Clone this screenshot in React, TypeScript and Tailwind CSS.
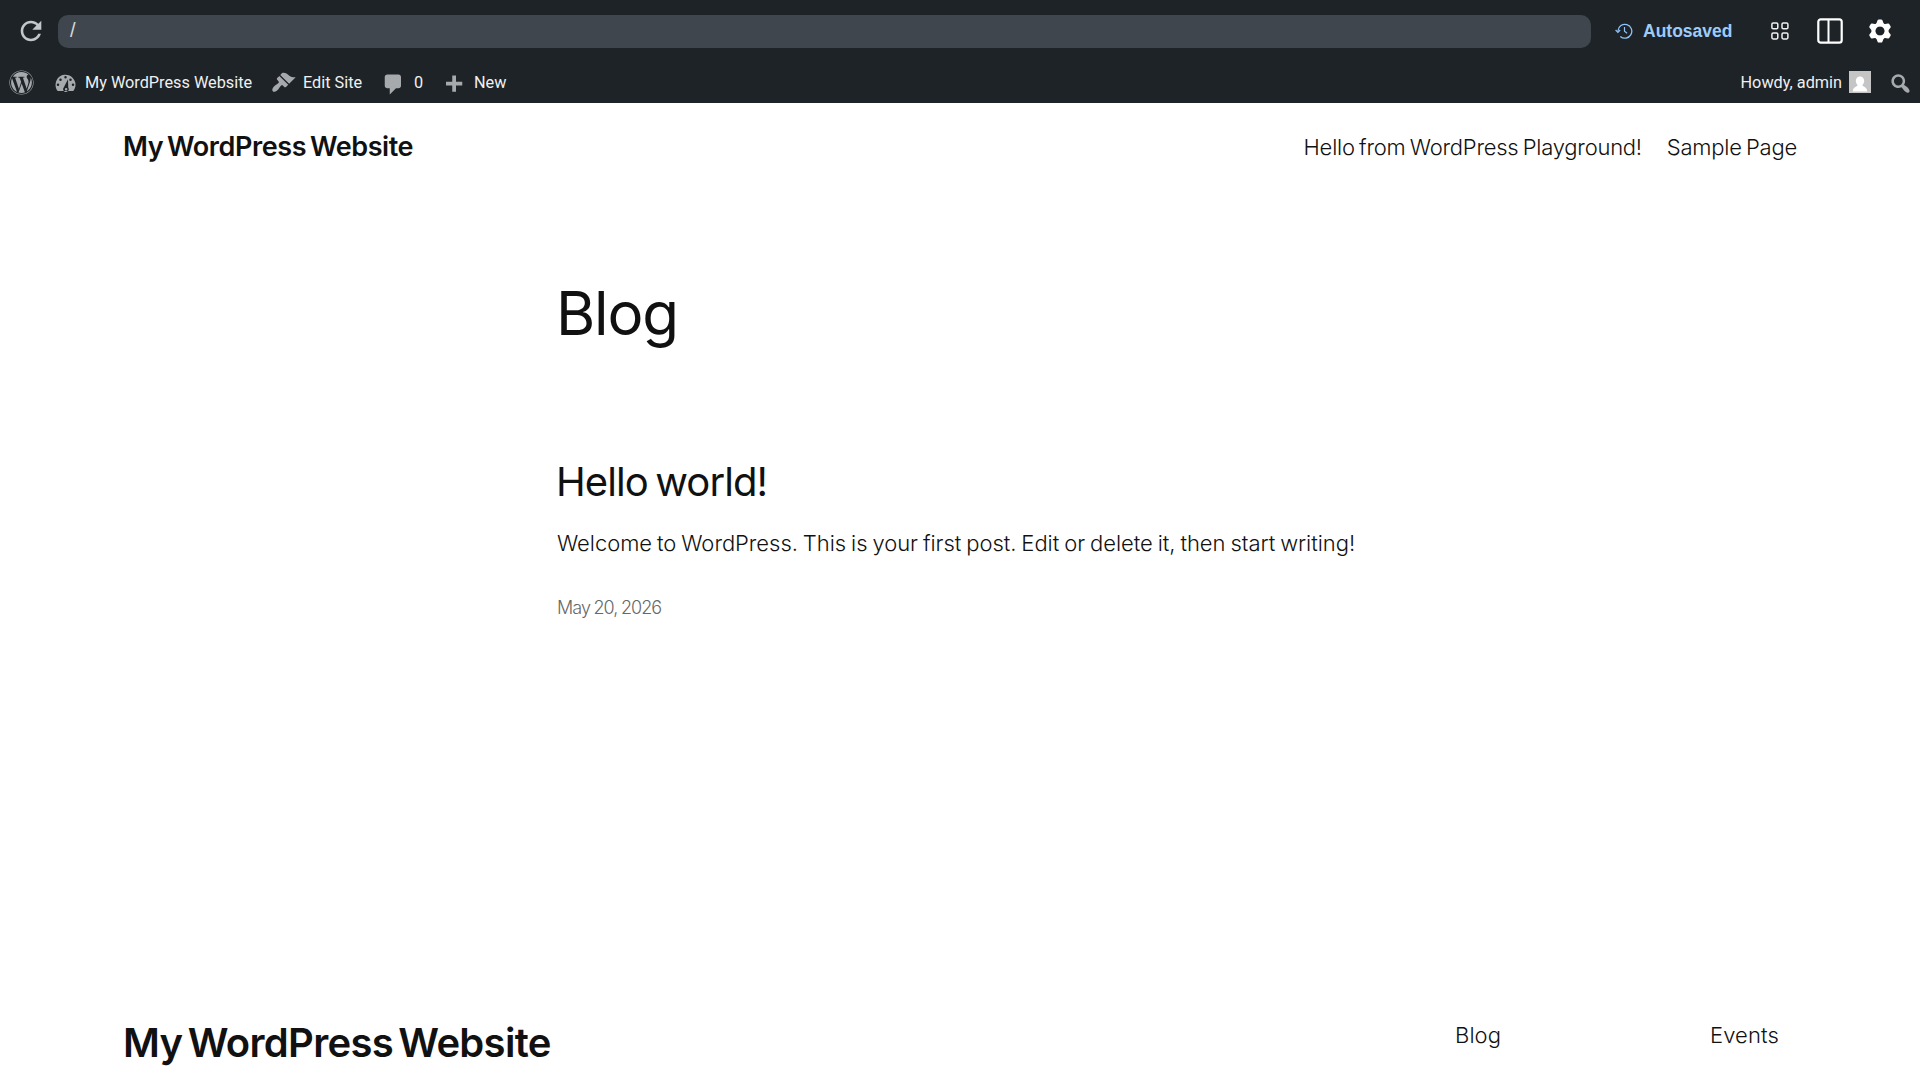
// Playground browser chrome wrapped around the site front page.
import type { ReactNode } from 'react'
import { FaWordpress } from 'react-icons/fa'
import { IoMdRefresh } from 'react-icons/io'

const FOOTER_LINKS = ['Blog', 'Events']
const GEAR_ANGLES = [0, 60, 120, 180, 240, 300]

function Dashicon({
  children,
  className,
}: {
  children: ReactNode
  className: string
}) {
  return (
    <svg
      viewBox="0 0 20 20"
      fill="currentColor"
      className={`shrink-0 text-[#a7aaad] ${className}`}
    >
      {children}
    </svg>
  )
}

function BrowserBar() {
  return (
    <div className="flex h-[62px] items-center bg-[#1e2327] pl-[16px]">
      <button type="button" className="flex h-[30px] w-[30px] items-center justify-center">
        <IoMdRefresh className="h-[30px] w-[30px] text-[#c3c6ca]" />
      </button>
      <div className="ml-[12px] flex h-[33px] w-[1533px] items-center rounded-[10px] bg-[#40464d] pl-[12px] font-['Liberation_Sans',sans-serif] text-[20px] leading-none text-[#d5d7da]">
        <span className="-mt-0.5">/</span>
      </div>
      <div className="ml-[24px] flex items-center">
        <svg viewBox="0 0 18 18" fill="none" stroke="#8fc4fa" className="h-[18px] w-[18px]">
          <path d="M3 9.5V8.8a6.9 6.9 0 1 1 2.3 5.6" strokeWidth="1.3" />
          <path d="M.6 8l2.3 2.3L5.2 8" strokeWidth="1.2" />
          <path d="M9.5 5v4.3l2.6 2" strokeWidth="1.2" />
        </svg>
        <span className="mt-[2px] ml-[10px] w-[90px] font-['Liberation_Sans',sans-serif] text-[17.5px] leading-none font-bold whitespace-nowrap text-[#9dcbfb]">
          Autosaved
        </span>
      </div>
      <svg
        viewBox="0 0 18 18"
        fill="none"
        stroke="#f0f0f1"
        strokeWidth="1.5"
        className="ml-[38px] h-[18px] w-[18px]"
      >
        <rect x=".9" y=".9" width="5.9" height="5.9" rx="1.3" />
        <rect x="11" y=".9" width="5.9" height="5.9" rx="1.3" />
        <rect x=".9" y="11" width="5.9" height="5.9" rx="1.3" />
        <rect x="11" y="11" width="5.9" height="5.9" rx="1.3" />
      </svg>
      <svg
        viewBox="0 0 26 26"
        fill="none"
        stroke="#ffffff"
        strokeWidth="2.2"
        className="ml-[28px] h-[26px] w-[26px]"
      >
        <rect x="1.3" y="1.3" width="23.4" height="23.4" rx="2.5" />
        <path d="M11.5 1v24" strokeWidth="2" />
      </svg>
      <svg viewBox="-14 -14 28 28" stroke="#ffffff" className="ml-[23px] h-[28px] w-[28px]">
        {GEAR_ANGLES.map((angle) => (
          <path
            key={angle}
            d="M-1.2 -10.2h2.4L2.8 -6h-5.6z"
            fill="#ffffff"
            strokeWidth="2.6"
            strokeLinejoin="round"
            transform={`rotate(${angle})`}
          />
        ))}
        <circle r="6.6" fill="none" strokeWidth="4" />
      </svg>
    </div>
  )
}

function AdminBar() {
  return (
    <div className="flex h-[41px] items-center bg-[#1d2327] pr-[7px] pl-[9px] font-[Roboto,sans-serif] text-[16.25px] leading-none whitespace-nowrap text-[#f0f0f1]">
      <FaWordpress className="h-[25px] w-[25px] shrink-0 text-[#a7aaad]" />
      <Dashicon className="mt-[2px] ml-[19px] h-[25px] w-[25px]">
        <path
          fillRule="evenodd"
          d="M3.76 16h12.480A8 8 0 1 0 2 11c0 1.9.66 3.64 1.76 5zM10 4a1 1 0 1 1 0 2 1 1 0 0 1 0-2zM6 6a1 1 0 1 1 0 2 1 1 0 0 1 0-2zm8 0a1 1 0 1 1 0 2 1 1 0 0 1 0-2zm-5.4 7.2L12 6.5l.2 6.8a2.2 2.2 0 1 1-3.6-.1zM4 10a1 1 0 1 1 0 2 1 1 0 0 1 0-2zm12 0a1 1 0 1 1 0 2 1 1 0 0 1 0-2zm-5.5 3.5a1 1 0 1 0 0 2 1 1 0 0 0 0-2z"
        />
      </Dashicon>
      <span className="mt-[2px] ml-[7px] w-[168px]">My WordPress Website</span>
      <Dashicon className="ml-[18px] h-[25px] w-[25px]">
        <path d="M14.48 11.06L7.41 3.99l1.5-1.5c.5-.56 2.3-.47 3.51.32 1.21.8 1.43 1.28 2.91 2.1 1.18.64 2.45 1.26 4.45.85zm-.71.71L6.7 4.7 4.93 6.47c-.39.39-.39 1.02 0 1.41l1.06 1.06c.39.39.39 1.03 0 1.42-.6.6-1.43 1.11-2.21 1.69-.35.26-.7.53-1.01.84C1.43 14.23.4 16.08 1.4 17.07c.99 1 2.84-.03 4.18-1.36.31-.31.58-.66.85-1.02.57-.78 1.08-1.61 1.69-2.21.39-.39 1.02-.39 1.41 0l1.06 1.06c.39.39 1.02.39 1.41 0z" />
      </Dashicon>
      <span className="mt-[2px] ml-[7px] w-[60px]">Edit Site</span>
      <Dashicon className="mt-[4px] ml-[18px] h-[25px] w-[25px]">
        <path d="M5 2h9c1.1 0 2 .9 2 2v7c0 1.1-.9 2-2 2h-2l-5 5v-5H5c-1.1 0-2-.9-2-2V4c0-1.1.9-2 2-2z" />
      </Dashicon>
      <span className="mt-[2px] ml-[8px] w-[10px]">0</span>
      <Dashicon className="mt-[5px] ml-[17px] h-[25px] w-[25px]">
        <path d="M17 7v3h-5v5H9v-5H4V7h5V2h3v5h5z" />
      </Dashicon>
      <span className="mt-[2px] ml-[8px]">New</span>

      <span className="mt-[2px] ml-auto">Howdy, admin</span>
      <svg viewBox="0 0 22 22" className="-mt-px ml-[7px] h-[22px] w-[22px] shrink-0">
        <rect width="22" height="22" fill="#c5c5c5" />
        <path
          d="M11 5.5c-2.5 0-4.2 1.9-4.2 4.4 0 1.7.8 3.2 1.9 4.1-.2 1.5-4.5 1.5-5 6.5h14.6c-.5-5-4.8-5-5-6.5 1.1-.9 1.9-2.4 1.9-4.1 0-2.5-1.7-4.4-4.2-4.4z"
          fill="#ffffff"
        />
      </svg>
      <Dashicon className="mt-[2px] ml-[17px] h-[25px] w-[25px]">
        <path d="M12.14 4.18c1.87 1.87 2.11 4.75.72 6.89.12.1.22.21.36.31.2.16.47.36.81.59.34.24.56.39.66.47.42.31.73.57.94.78.32.32.6.65.84 1 .25.35.44.69.59 1.04.14.35.21.68.18 1-.02.32-.14.59-.36.81s-.49.34-.81.36c-.31.02-.65-.04-.99-.19-.35-.14-.7-.34-1.04-.59-.35-.24-.68-.52-1-.84-.21-.21-.47-.52-.77-.93-.1-.13-.25-.35-.47-.66-.22-.32-.4-.57-.56-.78-.16-.2-.29-.35-.44-.5-2.07 1.09-4.69.76-6.44-.98-2.14-2.15-2.14-5.64 0-7.78 2.15-2.15 5.63-2.15 7.78 0zm-1.41 6.36c1.36-1.37 1.36-3.58 0-4.95-1.37-1.37-3.59-1.37-4.95 0-1.37 1.37-1.37 3.58 0 4.95 1.36 1.37 3.58 1.37 4.95 0z" />
      </Dashicon>
    </div>
  )
}

function SiteHeader() {
  return (
    <header className="flex h-[86px] items-center justify-between px-[123px] whitespace-nowrap">
      <p className="text-[27px] leading-none font-semibold tracking-[-0.42px] [word-spacing:-2.5px]">
        My WordPress Website
      </p>
      <nav className="flex gap-[25px] pt-[2px] text-[22px] leading-none font-light tracking-[-0.24px] [word-spacing:-1.6px]">
        <a>Hello from WordPress Playground!</a>
        <a>Sample Page</a>
      </nav>
    </header>
  )
}

export default function App() {
  return (
    <div className="flex h-[1080px] w-[1920px] flex-col overflow-hidden bg-white font-[Inter,sans-serif] text-[#111111]">
      <BrowserBar />
      <AdminBar />
      <SiteHeader />

      {/* Post list */}
      <main className="flex-1 pl-[557px] whitespace-nowrap">
        <h1 className="-ml-px pt-[94px] text-[60px] leading-[60px] font-normal tracking-[-1.2px]">
          Blog
        </h1>
        <h2 className="-ml-px pt-[119px] text-[40px] leading-[40px] font-normal tracking-[-0.9px] [word-spacing:-3px]">
          Hello world!
        </h2>
        <p className="pt-[30px] text-[22px] leading-[22px] font-light tracking-[-0.04px] [word-spacing:-1.2px]">
          Welcome to WordPress. This is your first post. Edit or delete it, then
          start writing!
        </p>
        <p className="pt-[45px] text-[18px] leading-[18px] font-light tracking-[-0.95px] text-[#686868] [word-spacing:-0.6px]">
          May 20, 2026
        </p>
      </main>

      <footer className="flex h-[66px] items-start pl-[123px] whitespace-nowrap">
        <p className="w-[1332px] shrink-0 pt-[9px] text-[40px] leading-[40px] font-semibold tracking-[-0.7px] [word-spacing:-4px]">
          My WordPress Website
        </p>
        <div className="grid grid-cols-[255px_255px] pt-[10px] text-[22px] leading-[22px] font-light tracking-[0.1px]">
          {FOOTER_LINKS.map((label) => (
            <a key={label}>{label}</a>
          ))}
        </div>
      </footer>
    </div>
  )
}
